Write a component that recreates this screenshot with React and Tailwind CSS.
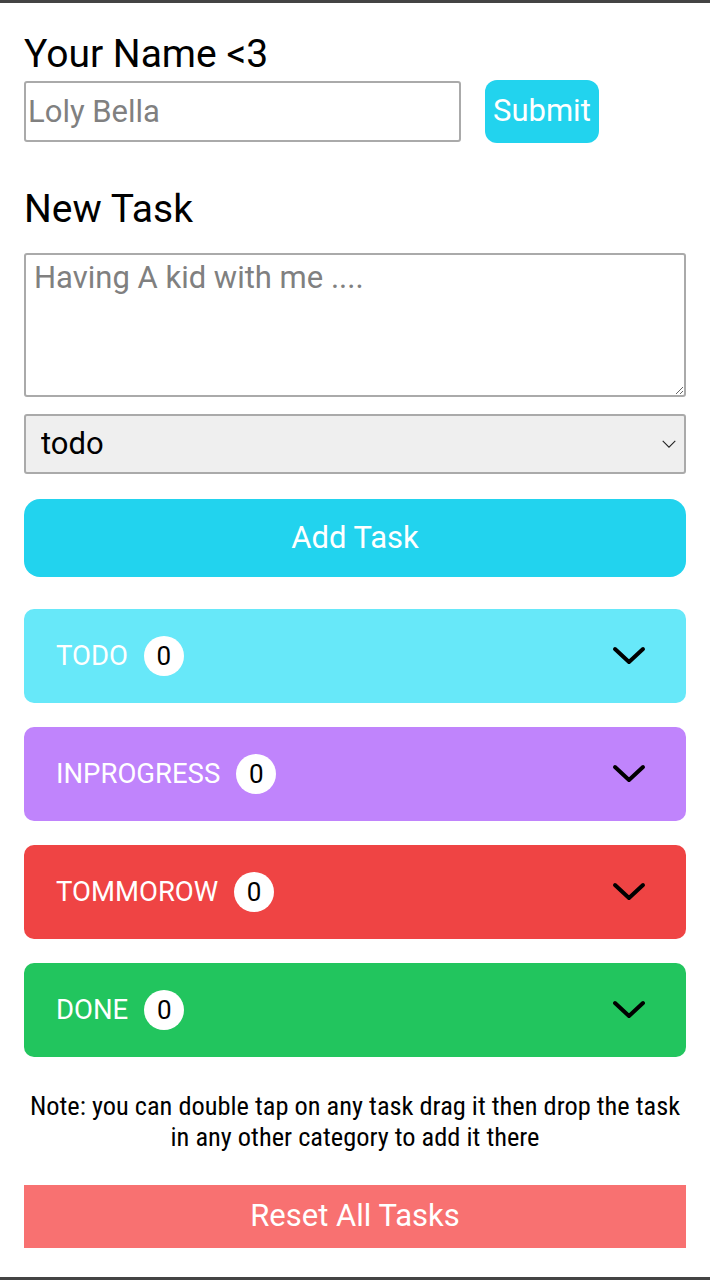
import { useState } from "react";

const CATEGORIES = [
  { name: "TODO", bg: "bg-[#67e8f9]" },
  { name: "INPROGRESS", bg: "bg-[#c084fc]" },
  { name: "TOMMOROW", bg: "bg-[#ef4444]" },
  { name: "DONE", bg: "bg-[#22c55e]" },
];

function Chevron({ className }) {
  return (
    <svg viewBox="0 0 34 22" className={className} fill="none">
      <polyline points="3,4 17,17 31,4" stroke="currentColor" strokeWidth="4" strokeLinecap="round" strokeLinejoin="round" />
    </svg>
  );
}

export default function App() {
  const [name, setName] = useState("");
  const [task, setTask] = useState("");
  const [cat, setCat] = useState("todo");

  return (
    <div className="min-h-[1280px] border-y-[3px] border-[#444] bg-white font-['Roboto',sans-serif] text-black">
      <div className="px-6 pt-[26px]">
        <h2 className="text-[39px] leading-[50px]">Your Name &lt;3</h2>
        <div className="mt-[1px] flex items-center gap-6">
          <input
            value={name}
            onChange={(e) => setName(e.target.value)}
            placeholder="Loly Bella"
            className="h-[61px] w-[437px] rounded-[3px] border-2 border-[#aaa] px-0.5 text-[31px] outline-none placeholder:text-[#808080]"
          />
          <button className="h-[63px] rounded-xl bg-[#22d3ee] px-2 text-[31px] text-white">Submit</button>
        </div>

        <h2 className="mt-[41px] text-[39px] leading-[50px]">New Task</h2>
        <textarea
          value={task}
          onChange={(e) => setTask(e.target.value)}
          placeholder="Having A kid with me ...."
          className="mt-[19px] block h-[144px] w-full rounded-[3px] border-2 border-[#aaa] px-2 py-0.5 text-[31px] leading-[42px] outline-none placeholder:text-[#808080]"
        />

        <div className="relative mt-[17px]">
          <select
            value={cat}
            onChange={(e) => setCat(e.target.value)}
            className="block h-[60px] w-full appearance-none rounded-[3px] border-2 border-[#aaa] bg-[#efefef] px-[15px] text-[31px] outline-none"
          >
            <option value="todo">todo</option>
            <option value="inprogress">inprogress</option>
            <option value="tommorow">tommorow</option>
            <option value="done">done</option>
          </select>
          <svg viewBox="0 0 16 10" className="pointer-events-none absolute right-[9px] top-[26px] h-[9px] w-[16px]" fill="none">
            <polyline points="1,1 8,8 15,1" stroke="#222" strokeWidth="1.2" />
          </svg>
        </div>

        <button className="mt-[25px] h-[78px] w-full rounded-2xl bg-[#22d3ee] text-[31px] text-white">Add Task</button>

        <div className="mt-[32px] flex flex-col gap-[24px]">
          {CATEGORIES.map((c) => (
            <div key={c.name} className={`flex h-[94px] items-center justify-between rounded-[10px] pl-8 pr-10 ${c.bg}`}>
              <div className="flex items-center gap-4">
                <span className="text-[27.5px] text-white">{c.name}</span>
                <span className="flex h-[40px] w-[40px] items-center justify-center rounded-full bg-white text-[26px] text-black">0</span>
              </div>
              <Chevron className="h-[22px] w-[34px] text-black" />
            </div>
          ))}
        </div>

        <p className="mt-[34px] text-center text-[26.4px] leading-[31px] font-stretch-condensed">
          Note: you can double tap on any task drag it then drop the task in any other category to add it there
        </p>

        <button className="mt-[32px] h-[63px] w-full bg-[#f87171] text-[31px] text-white">Reset All Tasks</button>
      </div>
    </div>
  );
}
